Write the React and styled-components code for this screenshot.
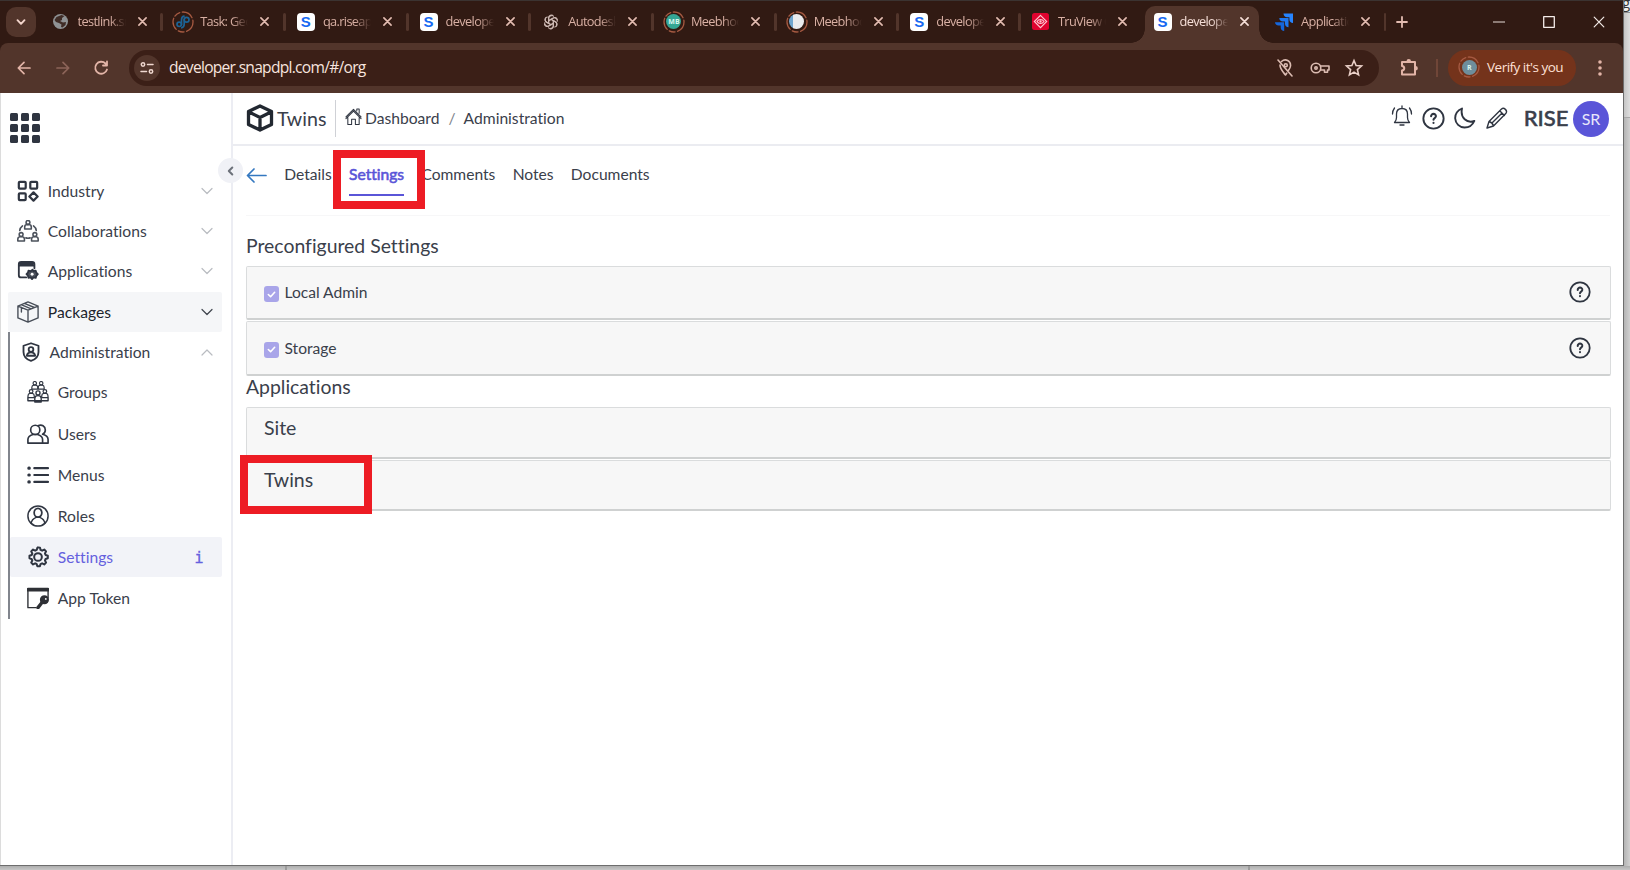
import React from "react";
import styled, { createGlobalStyle, css } from "styled-components";

const Global = createGlobalStyle`
  * { box-sizing: border-box; }
  body { margin: 0; overflow: hidden; background: #c9c9c9; }
  svg { display: block; flex: none; }
`;

const ui = `"Open Sans", "Noto Sans", sans-serif`;
const ink = "#2f3541";

const Desktop = styled.div`
  position: relative;
  width: 1630px;
  height: 870px;
  overflow: hidden;
  background: linear-gradient(90deg, #b4b4b4 1624px, #d0d0d0 1630px);
`;
const Behind = styled.div`
  position: absolute;
  right: 0;
  top: 0;
  width: 8px;
  height: 118px;
  overflow: hidden;
  background: linear-gradient(90deg, #bdbdbd, #dedede);
  border-bottom: 1px solid #a8a8a8;
  font: 15px/14px ${ui};
  color: #333;
`;
const BehindTop = styled.div`
  height: 13px;
  border-bottom: 1px solid #8d8d8d;
  background: #eee;
  line-height: 4px;
`;
const BottomStrip = styled.div`
  position: absolute;
  left: 0;
  right: 0;
  bottom: 0;
  height: 4px;
  display: flex;
  background: linear-gradient(#aeaeae, #c6c6c6);
`;
const BottomPart = styled.div`
  width: ${(p) => p.$w}px;
  border-right: 2px solid #9c9c9c;
`;
const Win = styled.div`
  position: relative;
  width: 1624px;
  height: 866px;
  display: flex;
  flex-direction: column;
  background: #fff;
  border-right: 1px solid #6d6d6d;
  border-bottom: 1px solid #6d6d6d;
`;

/* ---------- browser chrome ---------- */
const TabStrip = styled.div`
  height: 43px;
  display: flex;
  background: #311a13;
  border-top: 1px solid #3b3331;
  padding-left: 19px;
  font-family: ${ui};
`;
const TabSearch = styled.div`
  width: 30px;
  height: 30px;
  margin: 6px -8.5px 0 -13px;
  border-radius: 10px;
  background: #52352b;
  display: grid;
  place-items: center;
`;
const Tabs = styled.div`
  display: flex;
  width: 1360px;
  padding-left: 13px;
`;
const Tab = styled.div`
  position: relative;
  width: ${(p) => p.$w}px;
  height: 41px;
  display: flex;
  align-items: center;
  padding-left: 9px;
  color: ${(p) => (p.$active ? "#f6dfd8" : "#d9b0a4")};
  ${(p) =>
    p.$active &&
    css`
      &::before {
        content: "";
        position: absolute;
        inset: 5px 5px -1px 2px;
        background: #52352b;
        border-radius: 10px 10px 0 0;
      }
      &::after {
        content: "";
        position: absolute;
        left: -12px;
        right: -9px;
        bottom: -1px;
        height: 14px;
        background: radial-gradient(circle at 0 0, transparent 13.5px, #52352b 14px) left / 14px 14px no-repeat,
          radial-gradient(circle at 100% 0, transparent 13.5px, #52352b 14px) right / 14px 14px no-repeat;
      }
    `}
`;
const Fav = styled.div`
  position: relative;
  z-index: 1;
  width: 22px;
  display: grid;
  place-items: center;
`;
const TabTitle = styled.div`
  position: relative;
  z-index: 1;
  width: 48px;
  height: 22px;
  margin-left: 6px;
  overflow: hidden;
  white-space: nowrap;
  font-size: 12.8px;
  line-height: 20px;
  letter-spacing: -0.65px;
  mask-image: linear-gradient(90deg, #000 66%, transparent);
`;
const TabClose = styled.div`
  position: relative;
  z-index: 1;
  margin: 0 0 1px 12px;
`;
const Sep = styled.div`
  width: ${(p) => p.$w || 3}px;
  height: 18px;
  border-radius: 2px;
  background: #52352b;
  margin-left: auto;
  visibility: ${(p) => (p.$hide ? "hidden" : "visible")};
`;
const NewTab = styled.div`
  display: flex;
  align-items: center;
  margin-left: -1px;
`;
const Controls = styled.div`
  margin-left: auto;
  display: flex;
  align-items: center;
  gap: 38px;
  padding-right: 18px;
`;
const Toolbar = styled.div`
  height: 50px;
  display: flex;
  align-items: center;
  background: #52352b;
  font-family: ${ui};
  color: #e9c5bb;
  padding: 0 0 1px 15px;
`;
const ToolbarFrame = styled.div`
  background: #311a13;
  ${Toolbar} { border-radius: 8px 8px 0 0; }
`;
const NavButtons = styled.div`
  display: flex;
  gap: 20.5px;
  width: 114px;
`;
const Omnibox = styled.div`
  width: 1250px;
  height: 36px;
  border-radius: 18px;
  background: #3b1f17;
  display: flex;
  align-items: center;
  padding: 0 15px 0 5px;
`;
const SiteInfo = styled.div`
  width: 26px;
  height: 26px;
  border-radius: 50%;
  background: #52352b;
  display: grid;
  place-items: center;
`;
const Url = styled.div`
  flex: 1;
  margin-left: 9px;
  padding-bottom: 1px;
  font-size: 15.6px;
  line-height: 24px;
  letter-spacing: -0.73px;
  color: #f7e4df;
`;
const OmniIcons = styled.div`
  display: flex;
  gap: 14.5px;
`;
const ToolRight = styled.div`
  display: flex;
  align-items: center;
  padding-left: 20px;
`;
const Divider = styled.div`
  width: 2px;
  height: 18px;
  margin: 0 10px 0 17px;
  background: #704638;
`;
const Verify = styled.div`
  width: 128px;
  height: 36px;
  border-radius: 18px;
  background: #74331b;
  display: flex;
  align-items: center;
  gap: 7px;
  padding: 0 0 1px 10px;
  color: #ffe0d6;
  font-size: 13.5px;
  letter-spacing: -0.5px;
  white-space: nowrap;
  margin-right: 14px;
`;

/* ---------- page ---------- */
const Page = styled.div`
  flex: 1;
  display: flex;
  min-height: 0;
  font-family: Lato, sans-serif;
  font-size: 15.65px;
  font-variant-ligatures: none;
  color: #3a404b;
`;
const Sidebar = styled.aside`
  position: relative;
  width: 233px;
  border-left: 1px solid #dcdcdc;
  border-right: 2px solid #ecedf3;
  padding: 20px 9px 0 7px;
`;
const AppGrid = styled.div`
  display: grid;
  grid-template-columns: repeat(3, 8.4px);
  grid-auto-rows: 8.4px;
  gap: 2.4px;
  margin: 0 0 28px 2px;
`;
const GridCell = styled.i`
  background: ${ink};
  border-radius: 1.5px;
`;
const Collapse = styled.div`
  position: absolute;
  right: -12px;
  top: 65px;
  width: 25px;
  height: 25px;
  border-radius: 50%;
  background: #f0f1f6;
  display: grid;
  place-items: center;
`;
const MenuItem = styled.div`
  height: ${(p) => p.$h || 40.2}px;
  display: flex;
  align-items: center;
  padding: 0 9px;
  border-radius: 2px;
  background: ${(p) => p.$bg || "transparent"};
  color: ${(p) => p.$color || "inherit"};
`;
const MenuIcon = styled.div`
  width: 22px;
  display: grid;
  place-items: center;
`;
const MenuLabel = styled.span`
  flex: 1;
  margin-left: ${(p) => p.$gap || 8.8}px;
  line-height: 22px;
`;
const SubMenu = styled.div`
  border-left: 2px solid #81858d;
  height: 287px;
  ${MenuItem} { padding-left: 17px; }
  ${MenuItem}:first-child { padding-left: 9.5px; }
`;
const InfoMark = styled.span`
  font: 15px "DejaVu Sans Mono", monospace;
  -webkit-text-stroke: 0.3px currentColor;
  margin: 2px 9.5px 0 0;
`;
const Main = styled.main`
  flex: 1;
  display: flex;
  flex-direction: column;
  min-width: 0;
`;
const Header = styled.header`
  height: 53px;
  border-bottom: 2px solid #ebecf1;
  display: flex;
  align-items: center;
  padding: 0 14px 1px 13px;
`;
const Brand = styled.div`
  display: flex;
  align-items: center;
  gap: 3px;
  width: 90px;
  height: 37px;
  border-right: 1px solid #cfd1d6;
  font-size: 19.6px;
`;
const Crumbs = styled.div`
  display: flex;
  align-items: center;
  flex: 1;
  padding-left: 8.5px;
`;
const HomeMark = styled.span`
  padding-bottom: 4px;
`;
const CrumbText = styled.span`
  margin-left: ${(p) => p.$ml}px;
  color: ${(p) => p.$c || "inherit"};
`;
const HeaderActions = styled.div`
  display: flex;
  align-items: center;
  gap: 9.5px;
`;
const BellMark = styled.span`
  padding-bottom: 4px;
  margin-right: -0.5px;
`;
const Org = styled.span`
  font-size: 22px;
  font-weight: 500;
  -webkit-text-stroke: 0.5px currentColor;
  margin: 0 0 2px 6.5px;
`;
const Avatar = styled.div`
  width: 36px;
  height: 36px;
  border-radius: 50%;
  background: #5a55d8;
  color: #e8e7fb;
  font-size: 16px;
  display: grid;
  place-items: center;
  margin: 1px 0 0 -5px;
`;
const PageTabs = styled.nav`
  height: 70px;
  margin: 0 13px;
  border-bottom: 1px solid #f7f7f8;
  display: flex;
  padding-top: 18px;
`;
const BackArrow = styled.span`
  height: 20px;
  margin: -1px -1px 0 0;
`;
const PageTab = styled.div`
  height: 32px;
  line-height: 21px;
  margin-left: 17.3px;
  font-size: 15.6px;
  ${(p) =>
    p.$active &&
    css`
      color: #5a55d8;
      -webkit-text-stroke: 0.6px currentColor;
      border-bottom: 2px solid #5a55d8;
    `}
`;
const Section = styled.section`
  margin: 0 12px 0 13px;
  padding-top: ${(p) => p.$pt}px;
`;
const Heading = styled.h2`
  margin: 0;
  height: ${(p) => p.$h}px;
  font-size: 19.4px;
  font-weight: 400;
  line-height: ${(p) => p.$lh}px;
`;
const Card = styled.div`
  height: ${(p) => p.$h}px;
  background: #f7f7f7;
  border: 1px solid #dadcdd;
  border-bottom: 2px solid #cfd1d1;
  border-radius: 2px;
  display: flex;
  align-items: ${(p) => (p.$top ? "flex-start" : "center")};
  padding: ${(p) => (p.$top ? `${p.$top}px 17px` : "0 19px 1px 17px")};
  font-size: ${(p) => (p.$top ? 19.5 : 15.6)}px;
  margin-bottom: 1px;
`;
const Check = styled.div`
  width: 15px;
  height: 16px;
  border-radius: 3px;
  background: #a9a5e9;
  display: grid;
  place-items: center;
  margin: 4px 5.5px 0 0;
`;
const CardLabel = styled.span`
  flex: 1;
  line-height: 24px;
`;
const Highlight = styled.div`
  position: absolute;
  left: ${(p) => p.$x}px;
  top: ${(p) => p.$y}px;
  width: ${(p) => p.$w}px;
  height: 59px;
  border: 8px solid #ed1c24;
`;

/* ---------- icons ---------- */
const Ic = ({ s = 22, w = 1.5, vb = 24, c = "currentColor", children }) => (
  <svg width={s} height={s} viewBox={`0 0 ${vb} ${vb}`} fill="none" stroke={c} strokeWidth={w} strokeLinecap="round" strokeLinejoin="round">
    {children}
  </svg>
);
const CloseX = ({ c, s = 9, w = 1.8 }) => <Ic s={s} vb={10} w={w} c={c}><path d="M1 1l8 8M9 1L1 9" /></Ic>;
const Chevron = ({ up, c = "#b9bcc1" }) => <Ic s={12} vb={12} w={1.2} c={c}><path d={up ? "M1 9l5-5 5 5" : "M1 3.500l5 5 5-5"} /></Ic>;
const Help = ({ s = 22 }) => (
  <Ic s={s} vb={22} w={1.8} c={ink}>
    <circle cx="11" cy="11" r="9.700" />
    <path d="M8.700 8.900c0-3.100 4.700-3 4.600 0-.1 1.700-2.300 1.700-2.300 3.300M11 15v.2" strokeWidth="2" />
  </Ic>
);

const SLetter = styled.span`
  width: 18px;
  height: 18px;
  border-radius: 4px;
  background: #fff;
  color: #1769f2;
  font: bold 15px/18px "Liberation Sans", sans-serif;
  text-align: center;
`;
const RingBox = styled.span`
  display: grid;
  place-items: center;
  width: 22px;
  height: 22px;
  > * { grid-area: 1 / 1; }
`;
const Disc = styled.span`
  width: 15px;
  height: 15px;
  border-radius: 50%;
  background: ${(p) => p.$bg};
  color: #d9f5ee;
  font: bold 7px/15px ${ui};
  text-align: center;
`;
const Ring = ({ children }) => (
  <RingBox>
    <Ic s={22} vb={22} w={1.3} c="#a65a42"><circle cx="11" cy="11" r="10" strokeDasharray="12 2.500 6 2.500" /></Ic>
    {children}
  </RingBox>
);
const favicons = {
  s: <SLetter>S</SLetter>,
  globe: (
    <svg width="15" height="15" viewBox="0 0 15 15">
      <circle cx="7.5" cy="7.5" r="7.500" fill="#8f9294" />
      <path d="M8.500 1l3 1-2.500 2v2L7 7l3 1.500 3-.5-.5 3-3 2.500-1.500-.5.5-2.500L6 9 3 8 1.500 6l2-3z" fill="#311a13" opacity=".85" />
    </svg>
  ),
  loop: (
    <Ring>
      <Ic s={14} vb={14} w={1.7} c="#1c6396">
        <circle cx="3.200" cy="9.300" r="2.200" /><circle cx="10.600" cy="4.700" r="2.400" />
        <path d="M5.500 9.500V5c0-2 .8-3.400 2.500-3.800M8.200 4.500V9c0 2.200-.8 3.300-2.500 3.800" />
      </Ic>
    </Ring>
  ),
  gpt: (
    <Ic s={16} vb={24} w={1.7} c="#cdb9b3">
      {[0, 60, 120, 180, 240, 300].map((a) => (
        <path key={a} transform={`rotate(${a} 12 12)`} d="M8.500 14V6a4 4 0 0 1 7.200-2.600M8.500 10l6.500-3.800a4 4 0 0 1 5.500 1.500" />
      ))}
    </Ic>
  ),
  mb: <Ring><Disc $bg="#35a694">MB</Disc></Ring>,
  doc: <Ring><Disc $bg="linear-gradient(90deg, #6fa6cf 28%, #e9ebee 30%)" /></Ring>,
  tru: (
    <svg width="17" height="17" viewBox="0 0 17 17">
      <rect width="17" height="17" rx="2.500" fill="#e0032f" />
      <g fill="none" stroke="#ffc9d3" strokeWidth="1.100"><path d="M8.500 2.300l6.200 6.200-6.200 6.200-6.200-6.200z" /><path d="M5 8.500c1.700-2.600 5.300-2.600 7 0-1.700 2.600-5.300 2.600-7 0z" /><circle cx="8.500" cy="8.500" r=".6" /></g>
    </svg>
  ),
  jira: (
    <svg width="18" height="18" viewBox="0 0 18 18">
      <path d="M8.500.5H18V10c-2 0-3.600-1.500-3.600-3.500V4.200h-2.300c-2 0-3.600-1.600-3.600-3.700z" fill="#2684ff" />
      <path d="M4.300 5h9.200v9.200c-2 0-3.500-1.500-3.500-3.500V8.500H7.800C5.800 8.500 4.300 7 4.300 5z" fill="#1f78f0" />
      <path d="M0 9.300h9.200v8.700c-2 0-3.500-1.400-3.500-3.400v-2.100H3.500c-2 0-3.500-1.200-3.500-3.200z" fill="#1566db" />
    </svg>
  ),
};

const tabs = [
  ["globe", "testlink.sn"], ["loop", "Task: Geo"], ["s", "qa.riseapp"], ["s", "developer"], ["gpt", "Autodesk"],
  ["mb", "Meebhoo"], ["doc", "Meebhoo"], ["s", "developer"], ["tru", "TruView C"], ["s", "developer"], ["jira", "Applicatio"],
];

const person = "M8.500 8.500a3.500 4 0 1 1 7 0 3.500 4 0 1 1-7 0";
const Mini = ({ x, y, k = 1 }) => (
  <g transform={`translate(${x} ${y}) scale(${k})`}><circle cx="0" cy="-3" r="2.200" /><path d="M-3.800 4.500V2.500C-3.800.5-2.500-.3-1.500-.5h3C2.500-.3 3.800.5 3.800 2.500v2z" /></g>
);
const gearPath = "M12 1.500l2.200.3.600 2.500 1.700.8 2.300-1.200 2 2-1.200 2.300.8 1.700 2.300.7v2.800l-2.400.8-.7 1.600 1.200 2.300-2 2-2.300-1.200-1.700.8-.7 2.300h-2.800l-.8-2.400-1.600-.7-2.300 1.200-2-2 1.200-2.300-.8-1.700-2.300-.7v-2.800l2.400-.8.7-1.600-1.200-2.300 2-2 2.300 1.200 1.700-.8.700-2.300z";
const icons = {
  industry: <Ic w={2.4} c={ink}><rect x="2" y="2" width="7.500" height="7.500" rx="1" /><rect x="14.500" y="2" width="7.500" height="7.500" rx="1" /><rect x="2" y="14.500" width="7.500" height="7.500" rx="1" /><path d="M18 13.500l4.500 4.500-4.500 4.500-4.500-4.500z" /></Ic>,
  collab: <Ic w={1.8} c="#4b515b"><Mini x={12} y={5.500} k={0.95} /><Mini x={4.500} y={18.700} k={0.95} /><Mini x={19.500} y={18.700} k={0.95} /><path d="M6 6.500C4 8 3.200 9.500 3 11.500M18 6.500c2 1.500 2.800 3 3 5M9.700 19.500c1.500.6 3 .6 4.600 0" /></Ic>,
  apps: <Ic w={2} c={ink}><path d="M10 19H4.500A2.500 2.500 0 0 1 2 16.500v-12A2.500 2.500 0 0 1 4.500 2h12A2.500 2.500 0 0 1 19 4.500V9M2 6h17M4 4h13" /><path d="M17 10.500l1 1.700 2.400-.5.700 2.200 1.600 1.600-1.600 1.700-.7 2.300-2.400-.5-1.600 1.800-1.600-1.800-2.300.5-.6-2.400-1.500-1.600 1.500-1.700.6-2.200 2.300.6z" fill="#4c515b" /><circle cx="16.500" cy="15.500" r="1.600" fill="#fff" stroke="none" /></Ic>,
  box: <Ic w={1.5} c="#474d57"><path d="M12 1l11 4.500v13L12 23 1 18.500v-13zM1 5.500L12 10l11-4.500M12 10v13M4.500 4l11 4.500M8 2.600l11 4.500M4.800 7v5" /></Ic>,
  shield: <Ic s={20} w={2.2} c={ink}><path d="M12 1.500l9 3V12c0 6-4 9-9 10.700C7 21 3 18 3 12V4.500z" /><circle cx="12" cy="9" r="2.800" /><path d="M7 16.500c.5-3 3-4 5-4s4.500 1 5 4z" /></Ic>,
  groups: <Ic w={1.5} c={ink}><Mini x={8.500} y={5} k={0.85} /><Mini x={15.500} y={5} k={0.85} /><Mini x={4.500} y={14} k={0.9} /><Mini x={19.500} y={14} k={0.9} /><path d="M1 18.500v3h22v-3M8.500 23v-4c0-2 1.500-3 3.500-3s3.500 1 3.500 3v4z" /><circle cx="12" cy="13" r="2.200" /></Ic>,
  users: <Ic w={1.800} c={ink}><circle cx="9" cy="7.500" r="5" /><path d="M1 22v-4c0-3 2-4.500 5.500-5.500h5c3.500 1 5.500 2.500 5.500 5.500v4zM12 3c4-2 8 .5 8 4.500 0 2.500-1.500 4-3 4.800 4 1 6 2.700 6 5.700v4h-6" /></Ic>,
  menus: <Ic w={2.400} c={ink}><path d="M8 4.500h15M8 12h15M8 19.500h15" /><path d="M2 4.500h.5M2 12h.5M2 19.500h.5" strokeWidth="3.400" /></Ic>,
  roles: <Ic w={1.600} c={ink}><circle cx="12" cy="12" r="11" /><path d={person} transform="translate(-2.400 -1.700) scale(1.200)" /><path d="M4.500 20c.5-4 3-5.500 5.500-6.500h4c2.500 1 5 2.500 5.500 6.500" /></Ic>,
  settings: <Ic w={2.2} c={ink}><path d={gearPath} /><circle cx="12" cy="12" r="4.200" /></Ic>,
  token: <Ic w={1.500} c="#2e3035"><path d="M10 22.500H1V1.500h22V12" /><path d="M1 3h22" strokeWidth="3.600" /><circle cx="19" cy="14" r="4.200" fill="#2e3035" /><path d="M17 16l-5 6.500" strokeWidth="3.600" /><circle cx="20.500" cy="13" r="1" fill="#fff" stroke="none" /></Ic>,
};

export default function App() {
  return (
    <Desktop>
      <Global />
      <Behind><BehindTop>g</BehindTop></Behind>
      <BottomStrip><BottomPart $w={287} /><BottomPart $w={963} /></BottomStrip>
      <Win>
        <TabStrip>
          <TabSearch><Ic s={10} vb={10} w={1.9} c="#f3d5cc"><path d="M1.500 3.200L5 6.800l3.500-3.600" /></Ic></TabSearch>
          <Tabs>
            {tabs.map(([icon, title], i) => (
              <Tab key={i} $w={i < 7 ? 122.7 : 121.6} $active={i === 9}>
                <Fav>{favicons[icon]}</Fav>
                <TabTitle>{title}</TabTitle>
                <TabClose><CloseX c={i === 9 ? "#f6dfd8" : "#e3bcb1"} /></TabClose>
                <Sep $hide={i === 8 || i === 9} $w={i === 10 ? 2 : 3} />
              </Tab>
            ))}
          </Tabs>
          <NewTab><Ic s={30} vb={30} w={1.8} c="#e3bcb1"><path d="M15 10v10M10 15h10" /></Ic></NewTab>
          <Controls>
            <Ic s={12} vb={12} w={1.200} c="#e8dcd8"><path d="M.5 6h11" /></Ic>
            <Ic s={12} vb={12} w={1.300} c="#f4ebe8"><path d="M.7.7h10.600v10.600H.7z" /></Ic>
            <CloseX s={12} w={1} c="#f4ebe8" />
          </Controls>
        </TabStrip>
        <ToolbarFrame>
          <Toolbar>
            <NavButtons>
              <Ic s={18} vb={18} w={1.700} c="#e3b5a8"><path d="M15 9H3.500M9 3.300L3.300 9 9 14.700" /></Ic>
              <Ic s={18} vb={18} w={1.700} c="#8c6459"><path d="M3 9h11.500M9 3.300L14.700 9 9 14.700" /></Ic>
              <Ic s={18} vb={18} w={1.800} c="#e3b5a8"><path d="M15 10.500a6 6 0 1 1-1.500-6M15 2.500v4h-4" /></Ic>
            </NavButtons>
            <Omnibox>
              <SiteInfo>
                <Ic s={14} vb={14} w={1.500} c="#f0d8d0"><circle cx="3" cy="3.500" r="1.700" /><path d="M7.500 3.500H13M1 10.500h5.500" /><circle cx="11" cy="10.500" r="1.700" /></Ic>
              </SiteInfo>
              <Url>developer.snapdpl.com/#/org</Url>
              <OmniIcons>
                <Ic s={20} vb={20} w={1.600} c="#dcbcb2"><path d="M3 2l14 16M6.500 3.500c4-3.500 9.500-.5 9 4.500-.2 1.500-1 3-2 4.300M5 7c0 4 3 6.800 5.500 10l1.200-1.800" /><circle cx="10.800" cy="7.300" r="1.500" /></Ic>
                <Ic s={20} vb={20} w={1.600} c="#dcbcb2"><circle cx="6" cy="10" r="4.800" /><circle cx="6" cy="10" r="1.200" /><path d="M10.500 8H19v4h-1.500v2.200h-3V12h-4" /></Ic>
                <Ic s={20} vb={20} w={1.600} c="#e9cfc7"><path d="M10 2.500l2.100 5 5.400.5-4.100 3.600 1.200 5.300L10 14.100l-4.600 2.800 1.200-5.300L2.500 8l5.400-.5z" strokeLinejoin="miter" /></Ic>
              </OmniIcons>
            </Omnibox>
            <ToolRight>
              <Ic s={20} vb={20} w={2} c="#e3b5a8"><path d="M3 4h13v12.500H3v-4c3-.3 3-4.200 0-4.500z" /><path d="M8.500 3.300c0-1.800 2.500-1.800 2.500 0M16.500 9c1.800 0 1.800 2.500 0 2.500" /></Ic>
              <Divider />
              <Verify>
                <Ring><Disc $bg="#6e8e9c">R</Disc></Ring>
                <span>Verify it's you</span>
              </Verify>
              <svg width="20" height="18" viewBox="0 0 20 18" fill="#e3b5a8"><circle cx="10" cy="3" r="1.800" /><circle cx="10" cy="9" r="1.800" /><circle cx="10" cy="15" r="1.800" /></svg>
            </ToolRight>
          </Toolbar>
        </ToolbarFrame>

        <Page>
          <Sidebar>
            <AppGrid>{Array.from({ length: 9 }, (_, i) => <GridCell key={i} />)}</AppGrid>
            <MenuItem><MenuIcon>{icons.industry}</MenuIcon><MenuLabel>Industry</MenuLabel><Chevron /></MenuItem>
            <MenuItem><MenuIcon>{icons.collab}</MenuIcon><MenuLabel>Collaborations</MenuLabel><Chevron /></MenuItem>
            <MenuItem><MenuIcon>{icons.apps}</MenuIcon><MenuLabel>Applications</MenuLabel><Chevron /></MenuItem>
            <MenuItem $bg="#f5f6f8" $color="#20242c"><MenuIcon>{icons.box}</MenuIcon><MenuLabel>Packages</MenuLabel><Chevron c="#3f444d" /></MenuItem>
            <SubMenu>
              <MenuItem $h={40}><MenuIcon>{icons.shield}</MenuIcon><MenuLabel $gap={8}>Administration</MenuLabel><Chevron up /></MenuItem>
              <MenuItem $h={41.3}><MenuIcon>{icons.groups}</MenuIcon><MenuLabel>Groups</MenuLabel></MenuItem>
              <MenuItem $h={41.3}><MenuIcon>{icons.users}</MenuIcon><MenuLabel>Users</MenuLabel></MenuItem>
              <MenuItem $h={41.3}><MenuIcon>{icons.menus}</MenuIcon><MenuLabel>Menus</MenuLabel></MenuItem>
              <MenuItem $h={41.3}><MenuIcon>{icons.roles}</MenuIcon><MenuLabel>Roles</MenuLabel></MenuItem>
              <MenuItem $h={40.5} $bg="#f2f3f8" $color="#6560de"><MenuIcon>{icons.settings}</MenuIcon><MenuLabel>Settings</MenuLabel><InfoMark>i</InfoMark></MenuItem>
              <MenuItem $h={41.5}><MenuIcon>{icons.token}</MenuIcon><MenuLabel>App Token</MenuLabel></MenuItem>
            </SubMenu>
            <Collapse><Ic s={10} vb={10} w={2} c="#6c717a"><path d="M6.300 1.500L2.800 5l3.500 3.500" /></Ic></Collapse>
          </Sidebar>

          <Main>
            <Header>
              <Brand>
                <Ic s={28} vb={28} w={3.3} c="#222831"><path d="M14 2l11.500 5.500v13L14 26 2.500 20.500v-13zM3 8l11 5.500L25 8M14 13.500V26" /></Ic>
                Twins
              </Brand>
              <Crumbs>
                <HomeMark><Ic s={17} vb={18} w={1.100} c={ink}><path d="M1 9.500L9 1.500l8 8M1 11.200l8-8 8 8M3 10v7.500h4V12h4v5.500h4V10M12.500 3V1h2.500v4.500" /></Ic></HomeMark>
                <CrumbText $ml={3.5}>Dashboard</CrumbText>
                <CrumbText $ml={9} $c="#7d828b">/</CrumbText>
                <CrumbText $ml={8}>Administration</CrumbText>
              </Crumbs>
              <HeaderActions>
                <BellMark><Ic s={22} vb={22} w={1.300} c={ink}><path d="M3.500 17.500h15c-1.500-1.500-2-3-2-5V9c0-3.500-2-5.500-5.500-5.500S5.500 5.500 5.500 9v3.500c0 2-.5 3.500-2 5zM11 3.500V1M9 20h4M3.500 3C2 5 1.500 7 1.500 9M18.500 3c1.500 2 2 4 2 6" /></Ic></BellMark>
                <Help s={23} />
                <Ic s={22} vb={22} w={1.900} c={ink}><path d="M8 1.500C3.500 3.500 1 7 1.200 11.500c.3 5 4.300 9 9.300 9 4.500 0 8-2.200 9.800-6.500C13 16.500 6 11 8 1.500z" /></Ic>
                <Ic s={22} vb={22} w={1.400} c={ink}><path d="M1 21l2-6.500L15.500 2c2.500-2 6.300 1.600 4.500 4.200L7.500 19zM13.700 3.800l4.700 4.600M3 14.500c2 .5 4 2.500 4.500 4.500M15.800 6.200L6 16" /></Ic>
                <Org>RISE</Org>
                <Avatar>SR</Avatar>
              </HeaderActions>
            </Header>
            <PageTabs>
              <BackArrow><Ic s={22} vb={22} w={1.700} c="#3478c0"><path d="M20 12.500H2M8 6l-6.500 6.500L8 19" /></Ic></BackArrow>
              <PageTab>Details</PageTab>
              <PageTab $active>Settings</PageTab>
              <PageTab>Comments</PageTab>
              <PageTab>Notes</PageTab>
              <PageTab>Documents</PageTab>
            </PageTabs>
            <Section $pt={18}>
              <Heading $h={32} $lh={24}>Preconfigured Settings</Heading>
              <Card $h={54}><Check><Ic s={9} vb={10} w={1.800} c="#fff"><path d="M1.500 5L4 7.500 8.500 2.500" /></Ic></Check><CardLabel>Local Admin</CardLabel><Help /></Card>
              <Card $h={55}><Check><Ic s={9} vb={10} w={1.800} c="#fff"><path d="M1.500 5L4 7.500 8.500 2.500" /></Ic></Check><CardLabel>Storage</CardLabel><Help /></Card>
            </Section>
            <Section $pt={0}>
              <Heading $h={30} $lh={20}>Applications</Heading>
              <Card $top={8} $h={52}><CardLabel>Site</CardLabel></Card>
              <Card $top={7} $h={51}><CardLabel>Twins</CardLabel></Card>
            </Section>
          </Main>
        </Page>
        <Highlight $x={333} $y={150} $w={92} />
        <Highlight $x={240} $y={455} $w={132} />
      </Win>
    </Desktop>
  );
}
